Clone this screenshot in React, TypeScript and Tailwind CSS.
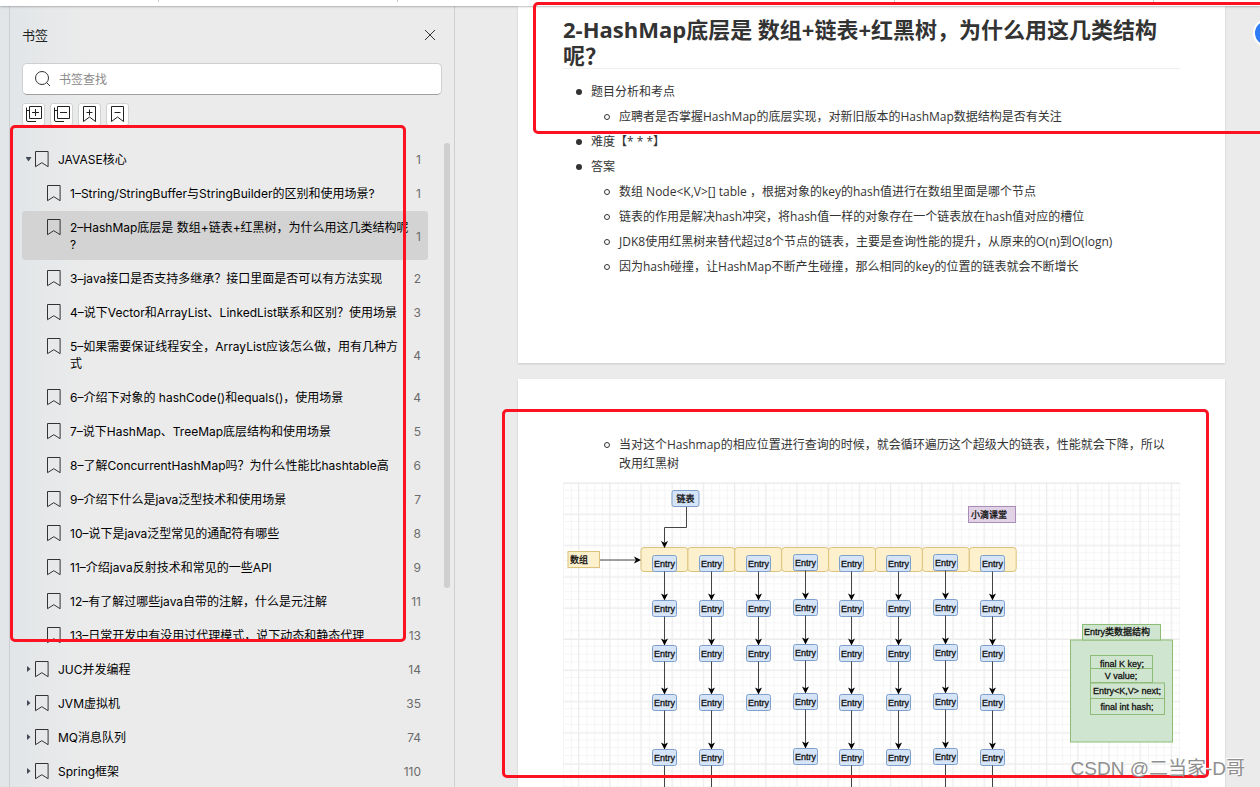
import { useState } from "react";

type Bookmark = { title: string; page: number; level: 0 | 1; open?: boolean };

const bookmarks: Bookmark[] = [
  { title: "JAVASE核心", page: 1, level: 0, open: true },
  { title: "1–String/StringBuffer与StringBuilder的区别和使用场景?", page: 1, level: 1 },
  { title: "2–HashMap底层是 数组+链表+红黑树，为什么用这几类结构呢\n?", page: 1, level: 1 },
  { title: "3–java接口是否支持多继承？接口里面是否可以有方法实现", page: 2, level: 1 },
  { title: "4–说下Vector和ArrayList、LinkedList联系和区别？使用场景", page: 3, level: 1 },
  { title: "5–如果需要保证线程安全，ArrayList应该怎么做，用有几种方\n式", page: 4, level: 1 },
  { title: "6–介绍下对象的 hashCode()和equals()，使用场景", page: 4, level: 1 },
  { title: "7–说下HashMap、TreeMap底层结构和使用场景", page: 5, level: 1 },
  { title: "8–了解ConcurrentHashMap吗？为什么性能比hashtable高", page: 6, level: 1 },
  { title: "9–介绍下什么是java泛型技术和使用场景", page: 7, level: 1 },
  { title: "10–说下是java泛型常见的通配符有哪些", page: 8, level: 1 },
  { title: "11–介绍java反射技术和常见的一些API", page: 9, level: 1 },
  { title: "12–有了解过哪些java自带的注解，什么是元注解", page: 11, level: 1 },
  { title: "13–日常开发中有没用过代理模式，说下动态和静态代理", page: 13, level: 1 },
  { title: "JUC并发编程", page: 14, level: 0 },
  { title: "JVM虚拟机", page: 35, level: 0 },
  { title: "MQ消息队列", page: 74, level: 0 },
  { title: "Spring框架", page: 110, level: 0 },
];

const answers = [
  "数组 Node<K,V>[] table ，根据对象的key的hash值进行在数组里面是哪个节点",
  "链表的作用是解决hash冲突，将hash值一样的对象存在一个链表放在hash值对应的槽位",
  "JDK8使用红黑树来替代超过8个节点的链表，主要是查询性能的提升，从原来的O(n)到O(logn)",
  "因为hash碰撞，让HashMap不断产生碰撞，那么相同的key的位置的链表就会不断增长",
];

// x of each column, how many entries hang below it, and whether it goes on
const columns = [
  { x: 101, dy: 0, rows: 5, more: true },
  { x: 148, dy: 0, rows: 5, more: true },
  { x: 195, dy: 0, rows: 4, more: false },
  { x: 242, dy: -1, rows: 5, more: false },
  { x: 288, dy: 0, rows: 5, more: true },
  { x: 335, dy: 0, rows: 5, more: false },
  { x: 382, dy: -1, rows: 5, more: true },
  { x: 429, dy: 0, rows: 5, more: true },
];
const rowTops = [73.5, 118.5, 163.5, 212.5, 267.5];

function BookmarkIcon() {
  return (
    <svg width="14" height="17" viewBox="0 0 14 17" fill="none" stroke="#333" className="shrink-0">
      <path d="M.5.5h12.6v15.2L6.8 11.7.5 15.7z" />
    </svg>
  );
}

function ToolIcon({ kind }: { kind: string }) {
  const stacked = kind.startsWith("all");
  const plus = kind.endsWith("plus");
  return (
    <svg width="17" height="17" viewBox="0 0 17 17" fill="none" stroke="#222">
      {stacked ? (
        <>
          <path d="M4.5.5h12v12h-12zM1.5 1.500V14q0 1.500 1.500 1.500h8M1.500 4.500h3" />
          <path d={plus ? "M7 6.500h7M10.500 3v7" : "M7 6.500h7"} />
        </>
      ) : (
        <>
          <path d="M2.500.5h12v15l-6-4.500-6 4.500z" />
          <path d={plus ? "M5.500 6.500h6M8.500 3.500v6" : "M5.500 6.500h6"} />
        </>
      )}
    </svg>
  );
}

function Arrow({ x, y }: { x: number; y: number }) {
  return <path d={`M${x} ${y}l-3.500-7 3.500 1.700 3.500-1.700z`} fill="#000" />;
}

function Entry({ x, y, label = "Entry", w = 24 }: { x: number; y: number; label?: string; w?: number }) {
  return (
    <>
      <rect x={x - w / 2} y={y} width={w} height="16" rx="2" fill="#d6e4f8" stroke="#7f9fcd" />
      <text x={x} y={y + 11.5} textAnchor="middle" stroke="#111" strokeWidth="0.3">
        {label}
      </text>
    </>
  );
}

function HashMapDiagram() {
  return (
    <svg
      viewBox="0 0 617 320"
      className="block w-full font-['Liberation_Sans','Noto_Sans_CJK_SC',sans-serif] text-[9px]"
      fill="#111"
    >
      <defs>
        <pattern id="minor" width="7.8" height="7.8" patternUnits="userSpaceOnUse">
          <path d="M0 .5h7.8M.5 0v7.800" stroke="#f5f5f5" />
        </pattern>
        <pattern id="major" x="15" y="1" width="31.2" height="31.2" patternUnits="userSpaceOnUse">
          <path d="M0 .5h31.200M.5 0v31.200" stroke="#ececec" />
        </pattern>
      </defs>
      <rect width="617" height="320" fill="url(#minor)" />
      <rect width="617" height="320" fill="url(#major)" />

      {/* bucket array */}
      {columns.map((c, i) => (
        <rect key={c.x} x={78 + i * 46.9} y="65.5" width="46.900" height="24" rx="3" fill="#fdf0cd" stroke="#dcc27a" />
      ))}

      <rect x="5" y="69.500" width="31.500" height="16" fill="#fdf0cd" stroke="#dcc27a" />
      <text x="7" y="81" stroke="#111" strokeWidth="0.3">数组</text>
      <path d="M37 78h35" stroke="#444" />
      <path d="M78 78l-7-3.500 1.700 3.500-1.700 3.500z" fill="#000" />

      <Entry x={122.5} y={8.5} label="链表" w={27} />
      <path d="M123.500 25v20.500h-22v15" fill="none" stroke="#444" />
      <Arrow x={101.5} y={66} />

      {/* linked lists */}
      {columns.map((c) => (
        <g key={c.x}>
          {rowTops.slice(0, c.rows).map((top, i) => (
            <g key={top}>
              {i > 0 && (
                <>
                  <path d={`M${c.x + 0.5} ${rowTops[i - 1] + 16 + c.dy}V${top - 5 + c.dy}`} stroke="#444" />
                  <Arrow x={c.x + 0.5} y={top + c.dy} />
                </>
              )}
              <Entry x={c.x + 0.5} y={top + c.dy} />
            </g>
          ))}
          {c.more && <path d={`M${c.x + 0.5} ${283.5 + c.dy}V320`} stroke="#444" />}
        </g>
      ))}

      <rect x="405.500" y="24.500" width="47" height="16" fill="#e1d2e6" stroke="#a98db8" />
      <text x="408" y="36" stroke="#111" strokeWidth="0.3">小滴课堂</text>

      {/* entry structure */}
      <g fill="#d0e5cf" stroke="#8dbc77">
        <rect x="507.500" y="158" width="102" height="102" />
        <rect x="519.500" y="142.500" width="78" height="15.500" />
        <rect x="527.500" y="173.500" width="62" height="13" />
        <rect x="527.500" y="186.500" width="62" height="14" />
        <rect x="527.500" y="201" width="74" height="15.500" />
        <rect x="527.500" y="216.500" width="74" height="16" />
      </g>
      <g stroke="#111" strokeWidth="0.3">
        <text x="521" y="153">Entry类数据结构</text>
        <g textAnchor="middle">
          <text x="559" y="185">final K key;</text>
          <text x="558" y="197">V value;</text>
          <text x="564" y="212">Entry&lt;K,V&gt; next;</text>
          <text x="564" y="228">final int hash;</text>
        </g>
      </g>
    </svg>
  );
}

function Dot() {
  return <span className="mr-[9px] size-[6px] shrink-0 rounded-full bg-[#333]" />;
}

function Ring() {
  return <span className="mr-[9px] size-[6px] shrink-0 rounded-full border border-[#333]" />;
}

export default function App() {
  const [query, setQuery] = useState("");
  const [active, setActive] = useState(2);

  return (
    <div className="relative flex h-screen flex-col overflow-hidden bg-[#ebebeb] font-['Inter','Noto_Sans_CJK_SC',sans-serif] text-[12px] text-black">
      {/* Bottom edge of the toolbar */}
      <header className="relative z-10 flex h-[6px] shrink-0 bg-white shadow-[0_1px_2px_rgba(0,0,0,0.25)]">
        <div className="h-[2px] w-[159px] border-r border-[#ccc]" />
        <div className="h-[2px] w-[239px] border-r border-[#ccc]" />
        <div className="h-[2px] w-[497px] border-r border-[#ccc]" />
        <div className="h-[2px] w-[259px] border-r border-[#ccc]" />
      </header>

      <div className="flex min-h-0 flex-1">
        {/* Bookmark panel */}
        <aside className="relative flex w-[455px] shrink-0 flex-col border-r border-[#cdcfd0] bg-linear-to-r from-[#e1e5e8] to-[#ebebeb] to-20% pl-[9px]">
          <div className="flex min-h-0 flex-1 flex-col border-l border-[#cdcfd0] pl-3">
            <div className="mt-[18px] flex h-[22px] items-center justify-between pr-[18px]">
              <h1 className="pt-[2px] text-[13px] text-[#222]">书签</h1>
              <button type="button" aria-label="关闭">
                <svg width="12" height="12" viewBox="0 0 12 12" stroke="#333">
                  <path d="M1 1l10 10M11 1L1 11" />
                </svg>
              </button>
            </div>

            <label className="mt-[17px] mr-3 flex h-8 shrink-0 items-center rounded-[5px] border border-[#cfcfcf] border-b-[#a0a0a0] bg-white pl-3">
              <svg width="16" height="16" viewBox="0 0 16 16" fill="none" stroke="#333" className="mr-2">
                <circle cx="7" cy="7" r="6.500" />
                <path d="M11.700 11.700L15 15" />
              </svg>
              <input
                aria-label="书签查找"
                placeholder="书签查找"
                value={query}
                onChange={(e) => setQuery(e.target.value)}
                className="min-w-0 flex-1 bg-transparent pt-[2px] outline-none placeholder:text-[#8a8a8a]"
              />
            </label>

            <div className="mt-2 flex gap-[5px]">
              {["all-plus", "all-minus", "plus", "minus"].map((kind) => (
                <button
                  key={kind}
                  type="button"
                  aria-label={kind}
                  className="flex h-[23px] w-[23px] items-center justify-center rounded-[3px] border border-[#d2d2d2] bg-white"
                >
                  <ToolIcon kind={kind} />
                </button>
              ))}
            </div>

            <ul className="mt-[15px] mr-[26px]">
              {bookmarks.map((b, i) => (
                <li key={b.title} className="pt-[2px]">
                  <button
                    type="button"
                    onClick={() => setActive(i)}
                    className={`flex w-full items-center rounded-[3px] pt-2 pb-[7px] pr-[7px] text-left leading-[17px] ${
                      b.level ? "pl-[25px]" : "pl-1"
                    } ${i === active ? "bg-[#d3d3d3]" : ""}`}
                  >
                    <span className="flex flex-1 items-start">
                      {b.level === 0 && (
                        <svg width="9" height="17" viewBox="0 0 9 17" fill="#444a55">
                          <path d={b.open ? "M-.5 6h6l-3 4.500z" : "M1 5v6l3.500-3z"} />
                        </svg>
                      )}
                      <BookmarkIcon />
                      <span className="ml-[9px] whitespace-pre">{b.title}</span>
                    </span>
                    <span className="flex w-0 justify-end text-[#6b6b6b]">{b.page}</span>
                  </button>
                </li>
              ))}
            </ul>
          </div>
          <div className="absolute top-[137px] right-1 h-[445px] w-[6px] rounded-full bg-[#cfcfcf]" />
          <div className="absolute top-[119px] left-[10px] h-[517px] w-[396px] rounded-[5px] border-3 border-[#fc1220]" />
        </aside>

        {/* Document */}
        <main className="relative min-w-0 flex-1 pl-[63px] pr-[35px] font-['Open_Sans','Noto_Sans_CJK_SC',sans-serif] text-[#333]">
          <article className="bg-white px-[45px] pt-[10px] pb-[84px] shadow-[0_1px_2px_rgba(0,0,0,0.15)]">
            <h2 className="border-b border-[#eee] text-[22px] leading-[26px] font-bold">
              2-HashMap底层是 数组+链表+红黑树，为什么用这几类结构
              <br />
              呢？
            </h2>
            <ul className="mt-[10px] pl-[13px] leading-[25px]">
              <li>
                <p className="flex items-center"><Dot />题目分析和考点</p>
                <ul className="pl-7">
                  <li className="flex items-center">
                    <Ring />应聘者是否掌握HashMap的底层实现，对新旧版本的HashMap数据结构是否有关注
                  </li>
                </ul>
              </li>
              <li className="flex items-center"><Dot />难度【* * *】</li>
              <li>
                <p className="flex items-center"><Dot />答案</p>
                <ul className="pl-7">
                  {answers.map((a) => (
                    <li key={a} className="flex items-center"><Ring />{a}</li>
                  ))}
                </ul>
              </li>
            </ul>
          </article>

          <article className="mt-4 bg-white px-[45px] pt-[56px] shadow-[0_1px_2px_rgba(0,0,0,0.15)]">
            <ul className="mb-[9px] pl-[41px] leading-[19px]">
              <li className="flex">
                <span className="flex h-[19px] items-center"><Ring /></span>
                <p>
                  当对这个Hashmap的相应位置进行查询的时候，就会循环遍历这个超级大的链表，性能就会下降，所以
                  <br />
                  改用红黑树
                </p>
              </li>
            </ul>
            <HashMapDiagram />
          </article>

          <div className="absolute -top-1 -right-2 left-[78px] z-20 h-[132px] rounded-[5px] border-3 border-[#fc1220]" />
          <div className="absolute top-[403px] right-[51px] left-[47px] h-[369px] rounded-[5px] border-3 border-[#fc1220]" />
          <button
            type="button"
            aria-label="助手"
            className="absolute top-[13px] -right-[21px] size-7 rounded-full border-2 border-white bg-[#2f7df6]"
          />
        </main>
      </div>

      <p className="absolute right-[15px] bottom-1 font-['Liberation_Sans','Noto_Sans_CJK_SC',sans-serif] text-[19px] leading-[28px] text-[#8f8f8f] [text-shadow:-1px_-1px_0_#fff]">
        CSDN @二当家-D哥
      </p>
    </div>
  );
}
